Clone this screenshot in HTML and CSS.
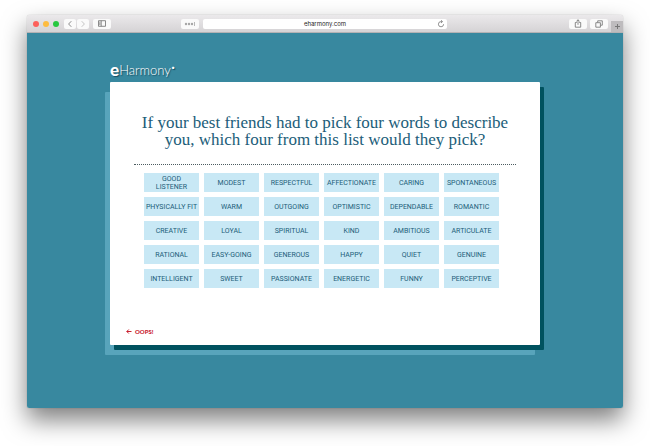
FILE: index.html
```html
<!DOCTYPE html>
<html lang="en">
<head>
    <meta charset="UTF-8">
    <meta name="viewport" content="width=device-width, initial-scale=1.0">
    <title>eHarmony</title>
    <link rel="stylesheet" href="styles.css">
</head>
<body>
    <div class="window">
        <header class="toolbar">
            <div class="toolbar-left">
                <span class="light red"></span>
                <span class="light yellow"></span>
                <span class="light green"></span>
                <div class="nav">
                    <button class="tool" aria-label="Back"><svg width="6" height="8" viewBox="0 0 6 8"><path d="M4.3 1.2 1.6 4l2.7 2.8"/></svg></button>
                    <button class="tool" aria-label="Forward" disabled><svg width="6" height="8" viewBox="0 0 6 8"><path d="M1.7 1.2 4.4 4 1.7 6.8"/></svg></button>
                </div>
                <button class="tool wide" aria-label="Sidebar"><svg width="8" height="7" viewBox="0 0 8 7"><path d="M.5.7h7v5.6h-7zM3.2.7v5.6M1.3 2.2h1.1M1.3 3.4h1.1M1.3 4.6h1.1"/></svg></button>
                <button class="tool wide extension" aria-label="Passwords"><svg width="12" height="6" viewBox="0 0 12 6"><g class="dots"><circle cx="2" cy="3" r="1.2"/><circle cx="5" cy="3" r="1.2"/><circle cx="8" cy="3" r="1.2"/></g><path d="M10.5 1v4"/></svg></button>
            </div>
            <div class="address">
                <input type="text" value="eharmony.com" aria-label="Address">
                <button class="reload" aria-label="Reload"><svg width="8" height="8" viewBox="0 0 8 8"><path d="M6.6 4.2A2.6 2.6 0 1 1 4 1.6h1.2M4 .2l1.5 1.4L4 3"/></svg></button>
            </div>
            <div class="toolbar-right">
                <button class="tool wide" aria-label="Share"><svg width="8" height="9" viewBox="0 0 8 9"><path d="M2.8 3.5H1.3v4.7h5.4V3.5H5.2M4 5.8V.8M2.4 2.3 4 .8l1.6 1.5"/></svg></button>
                <button class="tool wide" aria-label="Tabs"><svg width="8" height="8" viewBox="0 0 8 8"><path d="M2.7 2.5V.8h4.6v4.4H5.6M.8 2.7h4.6v4.5H.8z"/></svg></button>
                <button class="new-tab" aria-label="New tab"><svg width="7" height="7" viewBox="0 0 7 7"><path d="M3.5 1v5M1 3.5h5"/></svg></button>
            </div>
        </header>
        <main class="page">
            <div class="content">
                <a class="logo" href="#"><b>e</b>Harmony<span class="mark">•</span></a>
                <section class="card">
                    <h1>If your best friends had to pick four words to describe you, which four from this list would they pick?</h1>
                    <div class="words">
                        <button>Good<br>Listener</button>
                        <button>Modest</button>
                        <button>Respectful</button>
                        <button>Affectionate</button>
                        <button>Caring</button>
                        <button>Spontaneous</button>
                        <button>Physically Fit</button>
                        <button>Warm</button>
                        <button>Outgoing</button>
                        <button>Optimistic</button>
                        <button>Dependable</button>
                        <button>Romantic</button>
                        <button>Creative</button>
                        <button>Loyal</button>
                        <button>Spiritual</button>
                        <button>Kind</button>
                        <button>Ambitious</button>
                        <button>Articulate</button>
                        <button>Rational</button>
                        <button>Easy-going</button>
                        <button>Generous</button>
                        <button>Happy</button>
                        <button>Quiet</button>
                        <button>Genuine</button>
                        <button>Intelligent</button>
                        <button>Sweet</button>
                        <button>Passionate</button>
                        <button>Energetic</button>
                        <button>Funny</button>
                        <button>Perceptive</button>
                    </div>
                    <a class="back" href="#"><svg width="6" height="5" viewBox="0 0 6 5"><path d="M5.5 2.5H.8M2.8.5l-2 2 2 2"/></svg>OOPS!</a>
                </section>
            </div>
        </main>
    </div>
</body>
</html>
```

FILE: styles.css
```css
* {
    box-sizing: border-box;
}
body {
    display: flex;
    min-height: 100vh;
    margin: 0;
    padding: 15px 27px 38px;
    background-color: white;
    font-family: Roboto, sans-serif;
}
button {
    margin: 0;
    padding: 0;
    border: none;
    font-family: inherit;
    cursor: pointer;
}
svg {
    display: block;
    fill: none;
    stroke: currentColor;
}
.window {
    display: flex;
    flex: 1;
    flex-direction: column;
    border-radius: 3px 3px 2px 2px;
    box-shadow: 0 12px 24px rgba(0, 0, 0, 0.5), 0 0 1px rgba(0, 0, 0, 0.4);
}

/* browser toolbar */
.toolbar {
    display: flex;
    gap: 4px;
    height: 18px;
    border-bottom: 1px solid #b4b2b4;
    border-radius: 3px 3px 0 0;
    background: linear-gradient(#ebe9eb, #d5d3d5);
}
.toolbar-left,
.toolbar-right {
    display: flex;
    flex: 1;
    align-items: center;
    gap: 4px;
}
.toolbar-right {
    justify-content: flex-end;
    gap: 3px;
}
.light {
    width: 6px;
    height: 6px;
    border-radius: 50%;
}
.red {
    margin-left: 6px;
    background-color: #fc605b;
}
.yellow {
    background-color: #fdbc40;
}
.green {
    background-color: #28c840;
}
.nav {
    display: flex;
    gap: 1px;
    margin-left: 1px;
}
.tool {
    display: grid;
    place-items: center;
    width: 12px;
    height: 10px;
    border-radius: 2px;
    background-color: #fafafa;
    color: #6e6e6e;
}
.tool:disabled {
    color: #b8b8b8;
}
.wide {
    width: 18px;
}
.tool svg {
    stroke-width: 0.8;
}
.extension {
    margin-left: auto;
    color: #a6a6a6;
}
.dots {
    fill: currentColor;
    stroke: none;
}
.address {
    display: flex;
    align-self: center;
    width: 41%;
    height: 10px;
    padding: 0 2px 0 10px;
    border-radius: 2px;
    background-color: white;
}
.address input {
    flex: 1;
    min-width: 0;
    padding: 0;
    border: none;
    background: none;
    color: #222;
    font: 6px/10px Inter, sans-serif;
    text-align: center;
}
.reload {
    display: grid;
    place-items: center;
    width: 8px;
    background: none;
    color: #666;
}
.reload svg {
    stroke-width: 0.7;
}
.new-tab {
    display: grid;
    align-self: flex-end;
    place-items: center;
    width: 12px;
    height: 11px;
    background-color: #bebcbe;
    color: #777;
}

/* page */
.page {
    flex: 1;
    padding: 29px 24px 63px;
    border-radius: 0 0 2px 2px;
    background-color: #38889f;
}
.content {
    display: flex;
    flex-direction: column;
    max-width: 430px;
    height: 100%;
    margin: 0 auto;
}
.logo {
    display: flex;
    align-self: flex-start;
    color: white;
    font-family: Lato, sans-serif;
    font-size: 13px;
    font-weight: 300;
    line-height: 16px;
    text-decoration: none;
    text-shadow: 1px 1px 1px rgba(0, 40, 55, 0.6);
}
.logo b {
    font-size: 17px;
    font-weight: 900;
}
.mark {
    font-size: 8px;
    line-height: 10px;
}
.card {
    display: flex;
    flex: 1;
    flex-direction: column;
    margin-top: 4px;
    padding: 32px 24px 9px;
    border-radius: 1px;
    background-color: white;
    box-shadow: 4px 5px #00525f, -5px 10px #58a4bb;
}
h1 {
    margin: 0;
    padding-bottom: 16px;
    border-bottom: 1px dotted #4c5c60;
    color: #215d79;
    font: 17px/17px "Liberation Serif", serif;
    text-align: center;
}
.words {
    display: grid;
    grid-template-columns: repeat(6, 1fr);
    grid-auto-rows: 19px;
    gap: 5px;
    padding: 8px 17px 24px 10px;
}
.words button {
    background-color: #c8e8f5;
    color: #215d79;
    font-size: 7px;
    line-height: 8px;
    text-transform: uppercase;
}
.back {
    display: flex;
    align-items: center;
    align-self: flex-start;
    gap: 3px;
    margin-top: auto;
    margin-left: -8px;
    color: #c8202f;
    font-family: Lato, sans-serif;
    font-size: 6px;
    font-weight: 900;
    line-height: 9px;
    text-decoration: none;
}
```
